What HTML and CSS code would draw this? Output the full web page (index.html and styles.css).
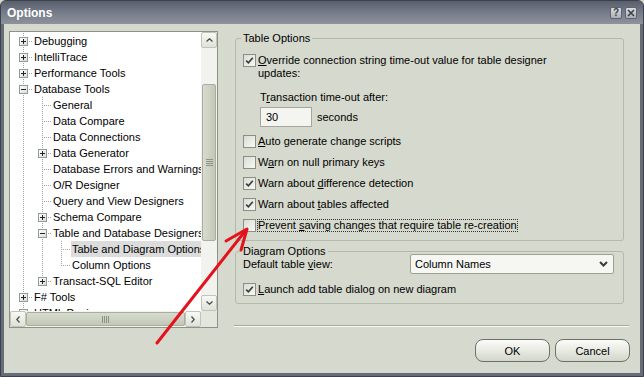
FILE: index.html
```html
<!DOCTYPE html>
<html lang="en">
<head>
    <meta charset="UTF-8">
    <meta name="viewport" content="width=device-width, initial-scale=1.0">
    <title>Options</title>
    <link rel="stylesheet" href="styles.css">
</head>
<body>
    <div class="window">
        <div class="titlebar">
            <span class="title">Options</span>
            <span class="tb-btn help">?</span>
            <span class="tb-btn">
                <svg width="8" height="8" viewBox="0 0 8 8"><path d="M1 1L7 7M7 1L1 7" stroke="#3d4149" stroke-width="1.6" fill="none"/></svg>
            </span>
        </div>
        <div class="client">
            <div class="tree">
                <div class="tree-body">
                    <div class="row"><span class="cell tee"><i class="exp plus"></i></span><span class="node">Debugging</span></div>
                    <div class="row"><span class="cell tee"><i class="exp plus"></i></span><span class="node">IntelliTrace</span></div>
                    <div class="row"><span class="cell tee"><i class="exp plus"></i></span><span class="node">Performance Tools</span></div>
                    <div class="row"><span class="cell tee"><i class="exp"></i></span><span class="node">Database Tools</span></div>
                    <div class="row"><span class="cell pipe"></span><span class="cell tee"></span><span class="node">General</span></div>
                    <div class="row"><span class="cell pipe"></span><span class="cell tee"></span><span class="node">Data Compare</span></div>
                    <div class="row"><span class="cell pipe"></span><span class="cell tee"></span><span class="node">Data Connections</span></div>
                    <div class="row"><span class="cell pipe"></span><span class="cell tee"><i class="exp plus"></i></span><span class="node">Data Generator</span></div>
                    <div class="row"><span class="cell pipe"></span><span class="cell tee"></span><span class="node">Database Errors and Warnings</span></div>
                    <div class="row"><span class="cell pipe"></span><span class="cell tee"></span><span class="node">O/R Designer</span></div>
                    <div class="row"><span class="cell pipe"></span><span class="cell tee"></span><span class="node">Query and View Designers</span></div>
                    <div class="row"><span class="cell pipe"></span><span class="cell tee"><i class="exp plus"></i></span><span class="node">Schema Compare</span></div>
                    <div class="row"><span class="cell pipe"></span><span class="cell tee"><i class="exp"></i></span><span class="node">Table and Database Designers</span></div>
                    <div class="row"><span class="cell pipe"></span><span class="cell pipe"></span><span class="cell tee"></span><span class="node sel">Table and Diagram Options</span></div>
                    <div class="row"><span class="cell pipe"></span><span class="cell pipe"></span><span class="cell end"></span><span class="node">Column Options</span></div>
                    <div class="row"><span class="cell pipe"></span><span class="cell end"><i class="exp plus"></i></span><span class="node">Transact-SQL Editor</span></div>
                    <div class="row"><span class="cell tee"><i class="exp plus"></i></span><span class="node">F# Tools</span></div>
                    <div class="row"><span class="cell tee"><i class="exp plus"></i></span><span class="node">HTML Designer</span></div>
                </div>
                <div class="vscroll">
                    <span class="sb-btn"><svg width="7" height="4" viewBox="0 0 7 4"><path d="M0.5 3.5L3.5 0.8L6.5 3.5" stroke="#4a4d46" stroke-width="1.3" fill="none"/></svg></span>
                    <span class="sb-gap"></span>
                    <span class="thumb-v"><svg width="7" height="7" viewBox="0 0 7 7"><path d="M0 0.5H7M0 2.5H7M0 4.5H7M0 6.5H7" stroke="#8d9284" stroke-width="1"/></svg></span>
                    <span class="sb-fill"></span>
                    <span class="sb-btn"><svg width="7" height="4" viewBox="0 0 7 4"><path d="M0.5 0.5L3.5 3.2L6.5 0.5" stroke="#4a4d46" stroke-width="1.3" fill="none"/></svg></span>
                </div>
                <div class="hscroll">
                    <span class="sb-btn"><svg width="4" height="7" viewBox="0 0 4 7"><path d="M3.5 0.5L0.8 3.5L3.5 6.5" stroke="#4a4d46" stroke-width="1.3" fill="none"/></svg></span>
                    <span class="thumb-h"><svg width="7" height="7" viewBox="0 0 7 7"><path d="M0.5 0V7M2.5 0V7M4.5 0V7M6.5 0V7" stroke="#8d9284" stroke-width="1"/></svg></span>
                    <span class="sb-btn"><svg width="4" height="7" viewBox="0 0 4 7"><path d="M0.5 0.5L3.2 3.5L0.5 6.5" stroke="#4a4d46" stroke-width="1.3" fill="none"/></svg></span>
                </div>
                <div class="corner"></div>
            </div>

            <div class="pane">
                <fieldset class="group">
                    <legend>Table Options</legend>
                    <div class="opt">
                        <span class="box checked"><svg width="11" height="11" viewBox="0 0 11 11"><path d="M2.2 5.6L4.4 7.8L8.8 2.8" stroke="#3c3e3a" stroke-width="1.7" fill="none"/></svg></span>
                        <span class="lbl wrap"><u>O</u>verride connection string time-out value for table designer updates:</span>
                    </div>
                    <div class="sub-label">T<u>r</u>ansaction time-out after:</div>
                    <div class="time-row">
                        <span class="num">30</span>
                        <span class="unit">seconds</span>
                    </div>
                    <div class="opt">
                        <span class="box"></span>
                        <span class="lbl"><u>A</u>uto generate change scripts</span>
                    </div>
                    <div class="opt">
                        <span class="box"></span>
                        <span class="lbl">W<u>a</u>rn on null primary keys</span>
                    </div>
                    <div class="opt">
                        <span class="box checked"><svg width="11" height="11" viewBox="0 0 11 11"><path d="M2.2 5.6L4.4 7.8L8.8 2.8" stroke="#3c3e3a" stroke-width="1.7" fill="none"/></svg></span>
                        <span class="lbl">Warn about <u>d</u>ifference detection</span>
                    </div>
                    <div class="opt">
                        <span class="box checked"><svg width="11" height="11" viewBox="0 0 11 11"><path d="M2.2 5.6L4.4 7.8L8.8 2.8" stroke="#3c3e3a" stroke-width="1.7" fill="none"/></svg></span>
                        <span class="lbl">Warn about <u>t</u>ables affected</span>
                    </div>
                    <div class="opt">
                        <span class="box"></span>
                        <span class="lbl focus">Prevent <u>s</u>aving changes that require table re-creation</span>
                    </div>
                </fieldset>

                <fieldset class="group diagram">
                    <legend>Diagram Options</legend>
                    <div class="view-row">
                        <span class="view-label">Default table <u>v</u>iew:</span>
                        <span class="select">
                            <span>Column Names</span>
                            <svg width="9" height="6" viewBox="0 0 9 6"><path d="M1 1L4.5 4.5L8 1" stroke="#3a3c38" stroke-width="2" fill="none"/></svg>
                        </span>
                    </div>
                    <div class="opt">
                        <span class="box checked"><svg width="11" height="11" viewBox="0 0 11 11"><path d="M2.2 5.6L4.4 7.8L8.8 2.8" stroke="#3c3e3a" stroke-width="1.7" fill="none"/></svg></span>
                        <span class="lbl"><u>L</u>aunch add table dialog on new diagram</span>
                    </div>
                </fieldset>

                <div class="sep"></div>
                <div class="buttons">
                    <button class="btn">OK</button>
                    <button class="btn">Cancel</button>
                </div>
            </div>
        </div>
    </div>

    <svg class="arrow" width="644" height="377" viewBox="0 0 644 377">
        <path d="M157 343L246 230" stroke="#e3121b" stroke-width="3" stroke-linecap="round" fill="none"/>
        <path d="M226 241L247 229L241 250" stroke="#e3121b" stroke-width="3" stroke-linecap="round" stroke-linejoin="round" fill="none"/>
    </svg>
</body>
</html>
```

FILE: styles.css
```css
* {
    box-sizing: border-box;
}
body {
    margin: 0;
    width: 644px;
    height: 377px;
    overflow: hidden;
    font-family: "Liberation Sans", Arial, sans-serif;
    font-size: 11px;
    color: #000;
    background: #d6d9cd;
}
.window {
    width: 644px;
    height: 377px;
    border: 1px solid #3d414a;
    border-radius: 6px 6px 0 0;
    background: #676c79;
    display: flex;
    flex-direction: column;
}
.titlebar {
    height: 23px;
    flex: none;
    display: flex;
    align-items: center;
    padding: 0 6px 0 6px;
    border-radius: 5px 5px 0 0;
    background: linear-gradient(#585e6c, #737986 45%, #8d929d);
}
.title {
    flex: 1;
    color: #fff;
    font-size: 12px;
    font-weight: bold;
}
.tb-btn {
    width: 12px;
    height: 12px;
    margin-left: 3px;
    border: 1px solid #5f646e;
    border-radius: 2px;
    background: linear-gradient(#dadde2, #a9adb5);
    display: flex;
    align-items: center;
    justify-content: center;
    color: #3d4149;
    font-size: 10px;
    font-weight: bold;
    line-height: 10px;
}
.client {
    flex: 1;
    margin: 0 3px 3px;
    background: #d6d9cd;
    display: flex;
}

/* tree */
.tree {
    margin: 7px 0 0 5px;
    width: 209px;
    height: 297px;
    border: 1px solid #8e9286;
    background: #fff;
    display: grid;
    grid-template-columns: 1fr 16px;
    grid-template-rows: 1fr 16px;
}
.tree-body {
    padding: 1px 0 0 4px;
    overflow: hidden;
}
.row {
    display: flex;
    width: max-content;
    height: 16px;
    line-height: 16px;
    white-space: nowrap;
}
.cell {
    position: relative;
    width: 19px;
    height: 16px;
    flex: none;
}
.pipe::before,
.tee::before,
.end::before {
    content: "";
    position: absolute;
    left: 9px;
    top: 0;
    width: 1px;
    height: 16px;
    background: linear-gradient(#a3a3a3 50%, transparent 50%) 0 0 / 1px 2px;
}
.end::before {
    height: 9px;
}
.tee::after,
.end::after {
    content: "";
    position: absolute;
    left: 10px;
    top: 8px;
    width: 9px;
    height: 1px;
    background: linear-gradient(to right, transparent 50%, #a3a3a3 50%) 0 0 / 2px 1px;
}
.exp {
    position: absolute;
    left: 5px;
    top: 4px;
    width: 9px;
    height: 9px;
    z-index: 1;
    border: 1px solid #8f9a9b;
    background: linear-gradient(135deg, #fff, #dcdcd5);
}
.exp::before {
    content: "";
    position: absolute;
    left: 1px;
    top: 3px;
    width: 5px;
    height: 1px;
    background: #222;
}
.plus::after {
    content: "";
    position: absolute;
    left: 3px;
    top: 1px;
    width: 1px;
    height: 5px;
    background: #222;
}
.node {
    padding: 0 1px;
}
.node.sel {
    background: #dcdcdc;
}

/* scrollbars */
.vscroll {
    display: flex;
    flex-direction: column;
    background: #f2f3ee;
}
.hscroll {
    display: flex;
    background: #f2f3ee;
}
.sb-btn {
    width: 16px;
    height: 16px;
    flex: none;
    display: flex;
    align-items: center;
    justify-content: center;
    border: 1px solid #c1c4b9;
    border-radius: 2px;
    background: linear-gradient(#f8f9f5, #dfe2d8);
}
.sb-gap {
    height: 36px;
    flex: none;
}
.sb-fill {
    flex: 1;
}
.thumb-v {
    height: 157px;
    flex: none;
    margin: 0 1px;
    border: 1px solid #a8ad9e;
    border-radius: 2px;
    background: linear-gradient(to right, #d8dccf, #c2c7b7);
    display: flex;
    align-items: center;
    justify-content: center;
}
.thumb-h {
    flex: 1;
    margin: 1px 0;
    border: 1px solid #a8ad9e;
    border-radius: 2px;
    background: linear-gradient(#d8dccf, #c2c7b7);
    display: flex;
    align-items: center;
    justify-content: center;
}
.corner {
    background: #e3e6dc;
}

/* right pane */
.pane {
    margin-left: 16px;
    width: 396px;
    display: flex;
    flex-direction: column;
}
.group {
    margin: 8px 6px 0 1px;
    padding: 9px 7px 8px;
    min-width: 0;
    border: 1px solid #b5b9ac;
    border-radius: 3px;
}
.group legend {
    margin-left: -2px;
    padding: 0 2px;
    line-height: 13px;
}
.group.diagram {
    margin-top: 4px;
    padding-top: 0;
    padding-bottom: 7px;
}
.opt {
    display: flex;
    align-items: flex-start;
    margin-top: 8px;
    line-height: 13px;
}
.opt:first-of-type {
    margin-top: 0;
}
.box {
    width: 13px;
    height: 13px;
    flex: none;
    margin-right: 1px;
    border: 1px solid #8b8f85;
    background: linear-gradient(135deg, #d9dcd3, #f8f8f5);
    display: flex;
}
.lbl {
    padding: 0 1px;
}
.lbl.wrap {
    max-width: 300px;
}
.lbl.focus {
    outline: 1px dotted #333;
    outline-offset: -1px;
}
.sub-label {
    margin-top: 11px;
    padding-left: 17px;
    line-height: 13px;
}
.time-row {
    margin-top: 3px;
    padding-left: 17px;
    display: flex;
    align-items: center;
}
.num {
    width: 52px;
    height: 20px;
    padding-left: 5px;
    line-height: 18px;
    border: 1px solid #a3a79c;
    background: #f4f4f1;
}
.unit {
    margin-left: 5px;
}
.view-row {
    margin-top: -4px;
    display: flex;
    align-items: center;
    height: 20px;
}
.view-label {
    width: 167px;
}
.select {
    width: 204px;
    height: 20px;
    padding: 0 5px 0 4px;
    border: 1px solid #9da194;
    border-radius: 2px;
    background: #f6f6f3;
    display: flex;
    align-items: center;
    justify-content: space-between;
}
.diagram .opt {
    margin-top: 9px;
}
.sep {
    margin: 21px 1px 0 0;
    height: 2px;
    border-top: 1px solid #a6aa9e;
    border-bottom: 1px solid #fbfbf8;
}
.buttons {
    margin-top: 12px;
    display: flex;
    justify-content: flex-end;
    gap: 5px;
}
.btn {
    width: 75px;
    height: 23px;
    padding: 0;
    border: 1px solid #6c7067;
    border-radius: 8px;
    background: linear-gradient(#fbfbf9, #e6e8e0 55%, #d3d6cb);
    font-family: inherit;
    font-size: 11px;
    color: #000;
}

.arrow {
    position: absolute;
    left: 0;
    top: 0;
    pointer-events: none;
}
```
